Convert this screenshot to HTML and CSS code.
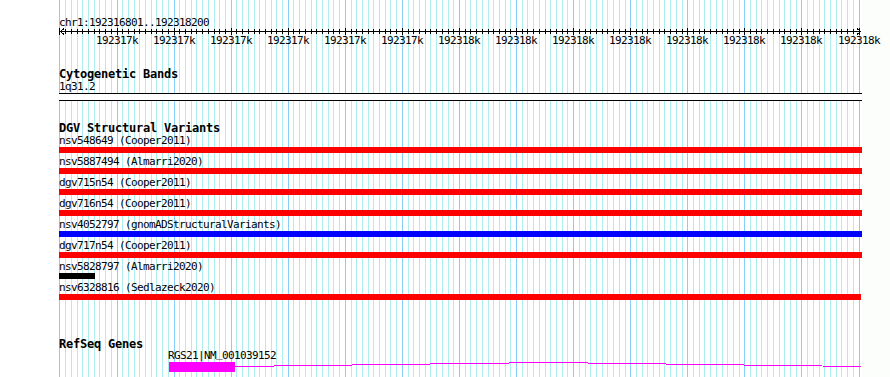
FILE: index.html
```html
<!DOCTYPE html>
<html lang="en">
<head>
<meta charset="utf-8">
<title>Genome view chr1:192316801..192318200</title>
<link rel="stylesheet" href="styles.css">
</head>
<body>
<div class="view">
  <svg class="grid" width="890" height="377" aria-hidden="true">
    <rect class="canvas" x="0" y="0" width="862" height="377"></rect>
    <path id="grid-minor" class="grid-minor" d=""></path>
    <path id="grid-major" class="grid-major" d=""></path>
  </svg>
  <div class="tracks">
    <div class="locus">chr1:192316801..192318200</div>
    <div class="ruler">
      <svg id="axis" class="axis" width="831" height="7">
        <path id="axis-minor" class="tick" d=""></path>
        <path id="axis-major" class="tick" d=""></path>
        <path class="tick" d="M2 3.5H801"></path>
        <path class="tick" d="M5 0.5L1.5 3.5L5 6.5M798 0.5L801.5 3.5L798 6.5"></path>
      </svg>
      <div id="ticklabels" class="ticklabels"></div>
    </div>

    <section class="track cyto">
      <h2 class="track-title">Cytogenetic Bands</h2>
      <div class="feat-label">1q31.2</div>
      <div class="band"></div>
    </section>

    <section class="track dgv">
      <h2 class="track-title">DGV Structural Variants</h2>
      <div class="sv-list">
        <div class="sv"><div class="feat-label">nsv548649 (Cooper2011)</div><div class="bar red"></div></div>
        <div class="sv"><div class="feat-label">nsv5887494 (Almarri2020)</div><div class="bar red"></div></div>
        <div class="sv"><div class="feat-label">dgv715n54 (Cooper2011)</div><div class="bar red"></div></div>
        <div class="sv"><div class="feat-label">dgv716n54 (Cooper2011)</div><div class="bar red"></div></div>
        <div class="sv"><div class="feat-label">nsv4052797 (gnomADStructuralVariants)</div><div class="bar blue"></div></div>
        <div class="sv"><div class="feat-label">dgv717n54 (Cooper2011)</div><div class="bar red"></div></div>
        <div class="sv"><div class="feat-label">nsv5828797 (Almarri2020)</div><div class="bar black" style="width:36px"></div></div>
        <div class="sv"><div class="feat-label">nsv6328816 (Sedlazeck2020)</div><div class="bar red" style="width:802px"></div></div>
      </div>
    </section>

    <section class="track refseq">
      <h2 class="track-title">RefSeq Genes</h2>
      <div class="gene">
        <div class="feat-label gene-label">RGS21|NM<span class="us">_</span>001039152</div>
        <svg class="transcript" width="693" height="11">
          <rect class="exon" x="0" y="1" width="66" height="10"></rect>
          <polyline class="intron" points="66,5.5 379,1.5 692,5.5"></polyline>
        </svg>
      </div>
    </section>
  </div>
</div>
<script src="script.js"></script>
</body>
</html>
```

FILE: styles.css
```css
* { box-sizing: border-box; }

html, body {
  margin: 0;
  padding: 0;
  background: #fcfefc;
}

body {
  font-family: "DejaVu Sans Mono", "Liberation Mono", monospace;
  color: #000;
}

.view {
  position: relative;
  width: 890px;
  height: 377px;
  overflow: hidden;
}

.grid {
  position: absolute;
  left: 0;
  top: 0;
  shape-rendering: crispEdges;
}

.canvas { fill: #fff; }

.grid-minor {
  stroke: #afeeee;
  stroke-width: 1;
  fill: none;
}

.grid-major {
  stroke: #87cefa;
  stroke-width: 1;
  fill: none;
}

.tracks {
  position: relative;
  padding-left: 59px;
  padding-top: 17px;
}

.locus,
.feat-label,
.ticklabel {
  font-size: 11px;
  line-height: 11px;
  height: 11px;
  letter-spacing: -0.62px;
  white-space: nowrap;
}

.ruler { display: block; }

.axis {
  display: block;
  overflow: visible;
  shape-rendering: crispEdges;
}

.tick {
  stroke: #000;
  stroke-width: 1;
  fill: none;
}

.ticklabels {
  position: relative;
  height: 11px;
}

.ticklabel {
  position: absolute;
  top: 0;
}

.track-title {
  margin: 0;
  font-size: 12px;
  line-height: 13px;
  height: 12px;
  font-weight: bold;
  letter-spacing: -0.22px;
  white-space: nowrap;
}

.cyto .track-title { margin-top: 22px; height: 13px; }
.dgv .track-title { margin-top: 21px; }
.refseq .track-title { margin-top: 35px; }

.band {
  width: 803px;
  height: 8px;
  margin-top: 1px;
  background: #fff;
  border-top: 1px solid #000;
  border-bottom: 1px solid #000;
}

.sv-list {
  display: flex;
  flex-direction: column;
  margin-top: 1px;
}

.sv {
  display: flex;
  flex-direction: column;
  align-items: flex-start;
}

.bar {
  width: 803px;
  height: 6px;
  margin-top: 1px;
  margin-bottom: 3px;
}

.bar.red { background: #ff0000; }
.bar.blue { background: #0000ff; }
.bar.black { background: #000000; }

.gene {
  display: flex;
  flex-direction: column;
  align-items: flex-start;
}

.gene-label { margin-left: 109px; }

.us {
  position: relative;
  top: -2px;
}

.transcript {
  display: block;
  margin-left: 110px;
  shape-rendering: crispEdges;
}

.exon { fill: #ff00ff; }

.intron {
  fill: none;
  stroke: #ff00ff;
  stroke-width: 1;
}
```

FILE: script.js
```js
(function () {
  var START = 192316800;
  var STEP = 5.7077;
  var X0 = 59.95;
  var N = 140;
  var OFF = 59;
  function px(j) { return Math.floor(X0 + STEP * j); }

  var gMinor = '', gMajor = '', tMinor = '', tMajor = '';
  var labels = document.getElementById('ticklabels');

  for (var j = 0; j <= N; j++) {
    var x = px(j) + 0.5;
    if (j % 10 === 0) {
      gMajor += 'M' + x + ' 0V377';
      tMajor += 'M' + (x - OFF) + ' 0V7';
      if (j > 0) {
        var bp = START + j * 10;
        var span = document.createElement('span');
        span.className = 'ticklabel';
        span.textContent = Math.round(bp / 1000) + 'k';
        span.style.left = (px(j) - OFF - 21) + 'px';
        labels.appendChild(span);
      }
    } else {
      gMinor += 'M' + x + ' 0V377';
      tMinor += 'M' + (x - OFF) + ' 1V6';
    }
  }

  document.getElementById('grid-minor').setAttribute('d', gMinor);
  document.getElementById('grid-major').setAttribute('d', gMajor);
  document.getElementById('axis-minor').setAttribute('d', tMinor);
  document.getElementById('axis-major').setAttribute('d', tMajor);
})();
```
